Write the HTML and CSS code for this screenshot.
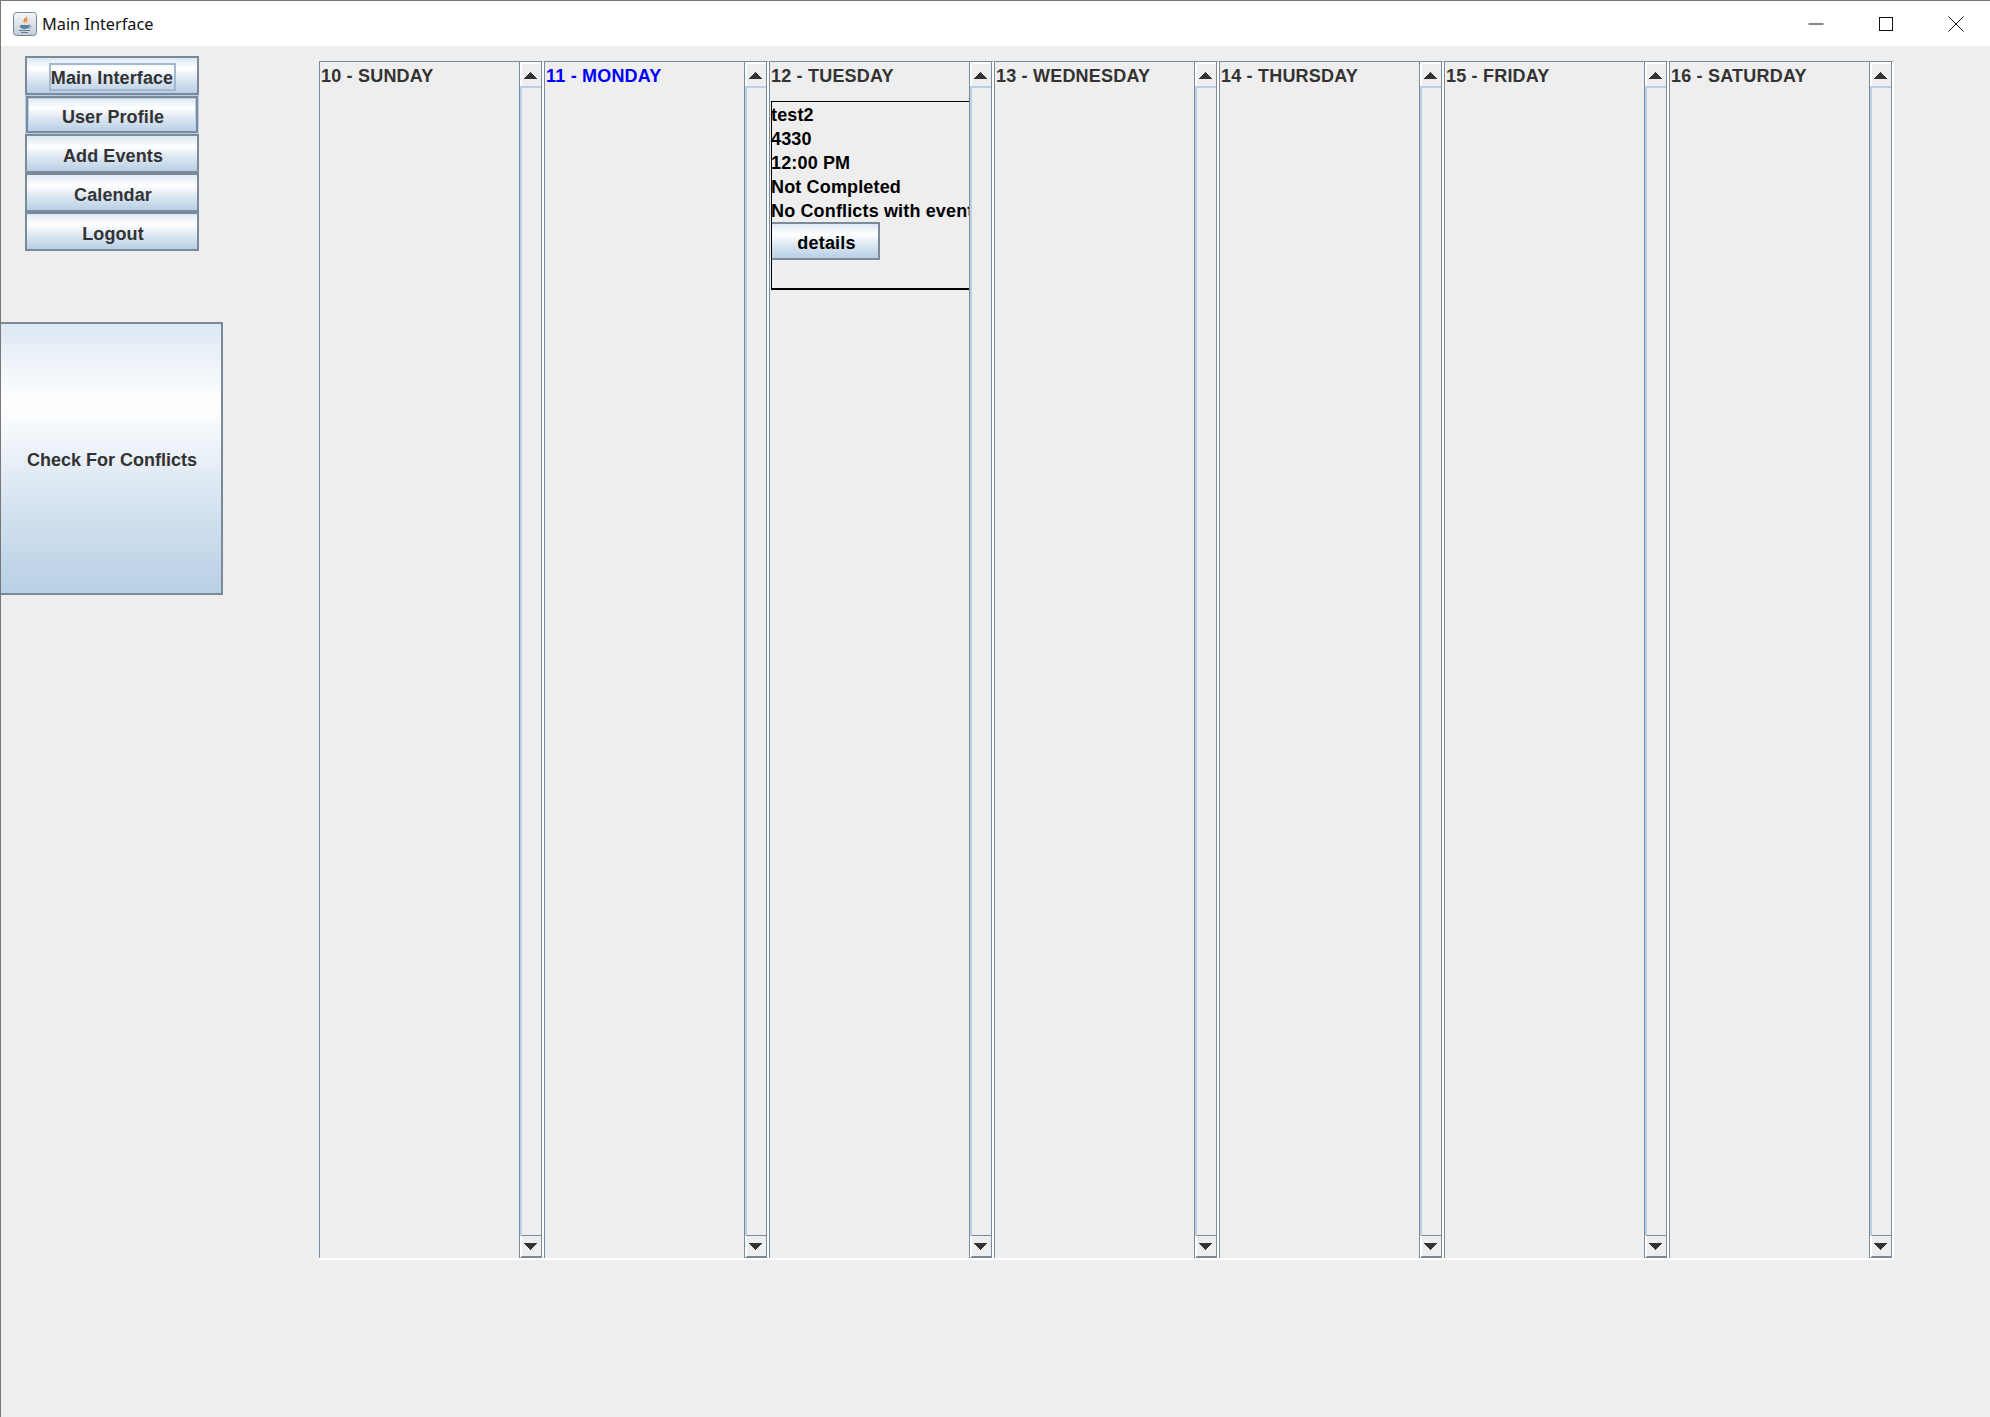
FILE: index.html
```html
<!DOCTYPE html>
<html lang="en">
<head>
    <meta charset="UTF-8">
    <meta name="viewport" content="width=device-width, initial-scale=1.0">
    <title>Main Interface</title>
    <link rel="stylesheet" href="styles.css">
</head>
<body>
    <header class="titlebar">
        <svg class="app-icon" width="24" height="24" viewBox="0 0 24 24">
            <defs>
                <linearGradient id="iconBg" x1="0" y1="0" x2="0" y2="1">
                    <stop offset="0" stop-color="#f6f8fa"/>
                    <stop offset="1" stop-color="#c3ccd6"/>
                </linearGradient>
            </defs>
            <rect x="0.500" y="0.500" width="23" height="23" rx="3" fill="url(#iconBg)" stroke="#76879a"/>
            <path d="M13.500 3c1 2.500-3.500 3.500-3 6.500.2 1 1 2 1 2-.5-2 4-3.500 2-8.500z" fill="#e8862a"/>
            <path d="M15.500 7c-2 1-2.500 2.500-1.500 4" fill="none" stroke="#e8862a" stroke-width="1"/>
            <path d="M7 13h9v1.500c0 1.500-1.500 2.500-4.500 2.500S7 16 7 14.500z" fill="#5b7f9e"/>
            <path d="M16 13c2.500 0 2 3-.5 3" fill="none" stroke="#5b7f9e"/>
            <path d="M6 18.500h11M8 20.500h7" stroke="#5b7f9e" stroke-width="1"/>
        </svg>
        <span class="window-title">Main Interface</span>
        <div class="window-controls">
            <svg width="16" height="16" viewBox="0 0 16 16"><path d="M0.500 8h15" stroke="#111" fill="none"/></svg>
            <svg width="16" height="16" viewBox="0 0 16 16"><rect x="1.500" y="1.500" width="13" height="13" stroke="#111" fill="none"/></svg>
            <svg width="16" height="16" viewBox="0 0 16 16"><path d="M0.500 0.500l15 15M15.500 0.500l-15 15" stroke="#111" fill="none"/></svg>
        </div>
    </header>

    <main class="content">
        <aside class="sidebar">
            <nav class="nav-buttons">
                <button class="btn nav-btn first"><span class="focus-ring">Main Interface</span></button>
                <button class="btn nav-btn selected">User Profile</button>
                <button class="btn nav-btn">Add Events</button>
                <button class="btn nav-btn">Calendar</button>
                <button class="btn nav-btn">Logout</button>
            </nav>
            <button class="btn conflicts-btn">Check For Conflicts</button>
        </aside>

        <section class="week">
            <div class="day">
                <div class="day-body"><h3 class="day-name">10 - SUNDAY</h3></div>
                <div class="scrollbar">
                    <div class="scroll-btn up"><svg width="14" height="7" viewBox="0 0 14 7"><path d="M7 0L14 7H0z"/></svg></div>
                    <div class="scroll-track"></div>
                    <div class="scroll-btn down"><svg width="14" height="7" viewBox="0 0 14 7"><path d="M0 0H14L7 7z"/></svg></div>
                </div>
            </div>
            <div class="day">
                <div class="day-body"><h3 class="day-name">11 - MONDAY</h3></div>
                <div class="scrollbar">
                    <div class="scroll-btn up"><svg width="14" height="7" viewBox="0 0 14 7"><path d="M7 0L14 7H0z"/></svg></div>
                    <div class="scroll-track"></div>
                    <div class="scroll-btn down"><svg width="14" height="7" viewBox="0 0 14 7"><path d="M0 0H14L7 7z"/></svg></div>
                </div>
            </div>
            <div class="day">
                <div class="day-body">
                    <h3 class="day-name">12 - TUESDAY</h3>
                    <div class="event">
                        <p>test2</p>
                        <p>4330</p>
                        <p>12:00 PM</p>
                        <p>Not Completed</p>
                        <p>No Conflicts with events</p>
                        <button class="btn details-btn">details</button>
                    </div>
                </div>
                <div class="scrollbar">
                    <div class="scroll-btn up"><svg width="14" height="7" viewBox="0 0 14 7"><path d="M7 0L14 7H0z"/></svg></div>
                    <div class="scroll-track"></div>
                    <div class="scroll-btn down"><svg width="14" height="7" viewBox="0 0 14 7"><path d="M0 0H14L7 7z"/></svg></div>
                </div>
            </div>
            <div class="day">
                <div class="day-body"><h3 class="day-name">13 - WEDNESDAY</h3></div>
                <div class="scrollbar">
                    <div class="scroll-btn up"><svg width="14" height="7" viewBox="0 0 14 7"><path d="M7 0L14 7H0z"/></svg></div>
                    <div class="scroll-track"></div>
                    <div class="scroll-btn down"><svg width="14" height="7" viewBox="0 0 14 7"><path d="M0 0H14L7 7z"/></svg></div>
                </div>
            </div>
            <div class="day">
                <div class="day-body"><h3 class="day-name">14 - THURSDAY</h3></div>
                <div class="scrollbar">
                    <div class="scroll-btn up"><svg width="14" height="7" viewBox="0 0 14 7"><path d="M7 0L14 7H0z"/></svg></div>
                    <div class="scroll-track"></div>
                    <div class="scroll-btn down"><svg width="14" height="7" viewBox="0 0 14 7"><path d="M0 0H14L7 7z"/></svg></div>
                </div>
            </div>
            <div class="day">
                <div class="day-body"><h3 class="day-name">15 - FRIDAY</h3></div>
                <div class="scrollbar">
                    <div class="scroll-btn up"><svg width="14" height="7" viewBox="0 0 14 7"><path d="M7 0L14 7H0z"/></svg></div>
                    <div class="scroll-track"></div>
                    <div class="scroll-btn down"><svg width="14" height="7" viewBox="0 0 14 7"><path d="M0 0H14L7 7z"/></svg></div>
                </div>
            </div>
            <div class="day">
                <div class="day-body"><h3 class="day-name">16 - SATURDAY</h3></div>
                <div class="scrollbar">
                    <div class="scroll-btn up"><svg width="14" height="7" viewBox="0 0 14 7"><path d="M7 0L14 7H0z"/></svg></div>
                    <div class="scroll-track"></div>
                    <div class="scroll-btn down"><svg width="14" height="7" viewBox="0 0 14 7"><path d="M0 0H14L7 7z"/></svg></div>
                </div>
            </div>
        </section>
    </main>
</body>
</html>
```

FILE: styles.css
```css
* {
    margin: 0;
    padding: 0;
    box-sizing: border-box;
}

html,
body {
    height: 100%;
}

body {
    display: flex;
    flex-direction: column;
    overflow: hidden;
    font-family: "Liberation Sans", Arial, sans-serif;
    font-size: 18px;
    font-weight: bold;
    color: #333;
    background-color: #eeeeee;
    border-top: 1px solid #777;
    border-left: 1px solid #777;
}

.titlebar {
    display: flex;
    align-items: center;
    flex: 0 0 45px;
    padding-left: 12px;
    background-color: white;
}

.app-icon {
    margin-right: 5px;
}

.window-title {
    font-family: "Noto Sans", sans-serif;
    font-size: 16.3px;
    font-weight: normal;
    color: #111;
}

.window-controls {
    display: flex;
    gap: 54px;
    margin-left: auto;
    padding-right: 26px;
}

.content {
    display: flex;
    flex: 1;
}

.btn {
    font: inherit;
    color: #333;
    cursor: pointer;
    border: 2px solid #7a8a99;
    background: linear-gradient(#dde8f3 0%, #ffffff 30%, #dde8f3 60%, #b8cfe5 100%);
}

.sidebar {
    flex: 0 0 318px;
}

.nav-buttons {
    display: flex;
    flex-direction: column;
    align-items: flex-start;
    margin: 10px 0 71px 24px;
}

.nav-btn {
    width: 174px;
    height: 39px;
    padding: 5px 0 0 2px;
    letter-spacing: 0.1px;
}

.nav-btn.first {
    padding: 3px 0 0;
}

.nav-btn.selected {
    box-shadow: inset 0 0 0 1px #b8cfe5;
    outline: 1px solid #b8cfe5;
    outline-offset: -1px;
    border-width: 3px;
}

.focus-ring {
    display: inline-block;
    width: 127px;
    height: 28px;
    line-height: 26px;
    border: 2px solid #a3b8cc;
}

.conflicts-btn {
    display: block;
    width: 222px;
    height: 273px;
    padding: 4px 0 0 2px;
    border-left: none;
}

.week {
    display: flex;
    align-items: flex-start;
    margin-top: 15px;
    height: 1199px;
    border-bottom: 2px solid white;
}

.day {
    display: flex;
    width: 225px;
    height: 1197px;
    border-top: 1px solid #7a8a99;
    border-left: 1px solid #7a8a99;
    border-right: 2px solid white;
}

.day-body {
    width: 199px;
    overflow: hidden;
}

.day-name {
    font-size: 18px;
    line-height: 28px;
    height: 39px;
    padding-left: 1px;
    letter-spacing: 0.2px;
}

/* the current day: second column of the week */
.day:nth-child(2) .day-name {
    color: #0000ff;
}

.event {
    width: 220px;
    height: 189px;
    margin-left: 1px;
    padding-top: 1px;
    color: black;
    white-space: nowrap;
    letter-spacing: 0.15px;
    border-top: 1px solid black;
    border-left: 1px solid black;
    border-bottom: 2px solid black;
}

.event p {
    margin-left: -1px;
    line-height: 24px;
}

.details-btn {
    display: block;
    width: 108px;
    height: 38px;
    margin-top: -1px;
    padding: 4px 0 0 3px;
    color: black;
    letter-spacing: 0.2px;
    border-left: none;
}

.scrollbar {
    display: flex;
    flex-direction: column;
    flex: 0 0 23px;
    height: 100%;
    border-left: 1px solid #7a8a99;
    border-right: 1px solid #7a8a99;
}

.scroll-btn {
    display: flex;
    align-items: center;
    justify-content: center;
    flex: 0 0 24px;
    padding-right: 3px;
    background-color: #eeeeee;
    border-top: 2px solid white;
    border-left: 2px solid white;
}

.scroll-btn svg {
    fill: #333;
    shape-rendering: crispEdges;
}

.scroll-btn.down {
    flex-basis: 23px;
    border-top: 1px solid #7a8a99;
    border-bottom: 2px solid #7a8a99;
}

.scroll-track {
    flex: 1;
    background-color: #eeeeee;
    border-top: 2px solid #b8cfe5;
    border-left: 2px solid #b8cfe5;
}
```
